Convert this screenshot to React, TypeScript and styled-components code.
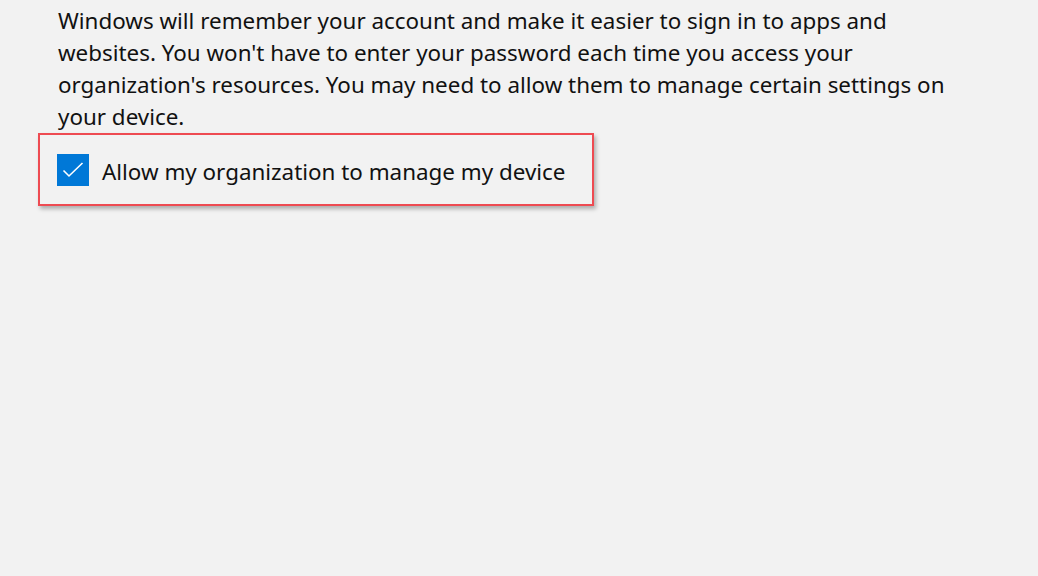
import React from 'react';
import styled, { createGlobalStyle } from 'styled-components';

const GlobalStyle = createGlobalStyle`
    html, body {
        margin: 0;
        padding: 0;
        background: #f2f2f2;
    }
    body {
        font-family: "Noto Sans", "Open Sans", sans-serif;
        color: #111;
    }
`;

const Page = styled.div`
    width: 1038px;
    height: 576px;
    padding: 5px 0 0 58px;
    box-sizing: border-box;
    background: #f2f2f2;
`;

const Description = styled.p`
    margin: 0;
    font-size: 22.4px;
    line-height: 32px;

    span {
        display: block;
        white-space: nowrap;
    }
`;

const Highlight = styled.div`
    width: 556px;
    height: 73px;
    box-sizing: border-box;
    margin-left: -20px;
    padding: 18px 0 0 17px;
    border: 2px solid #ee4b52;
    box-shadow: 2px 3px 4px rgba(0, 0, 0, 0.28);
`;

const CheckRow = styled.label`
    display: flex;
    align-items: center;
    gap: 13px;
    font-size: 22.4px;
    cursor: pointer;
`;

const Label = styled.span`
    padding-top: 3px;
`;

const Box = styled.span<{ $checked: boolean }>`
    width: 32px;
    height: 32px;
    flex: none;
    display: flex;
    align-items: center;
    justify-content: center;
    background: ${p => (p.$checked ? '#0078d7' : 'transparent')};
    border: ${p => (p.$checked ? 'none' : '2px solid #333')};
    box-sizing: border-box;
`;

function App() {
    const [checked, setChecked] = React.useState(true);

    return (
        <>
            <GlobalStyle />
            <Page>
                <Description>
                    <span>Windows will remember your account and make it easier to sign in to apps and</span>
                    <span>websites. You won't have to enter your password each time you access your</span>
                    <span>organization's resources. You may need to allow them to manage certain settings on</span>
                    <span>your device.</span>
                </Description>
                <Highlight>
                    <CheckRow onClick={() => setChecked(!checked)}>
                        <Box $checked={checked}>
                            {checked && (
                                <svg width="22" height="16" viewBox="0 0 22 16">
                                    <path d="M1.5 8.5 L7 14 L20.5 1" fill="none" stroke="#fff" strokeWidth="1.6" />
                                </svg>
                            )}
                        </Box>
                        <Label>Allow my organization to manage my device</Label>
                    </CheckRow>
                </Highlight>
            </Page>
        </>
    );
}

export default App;
